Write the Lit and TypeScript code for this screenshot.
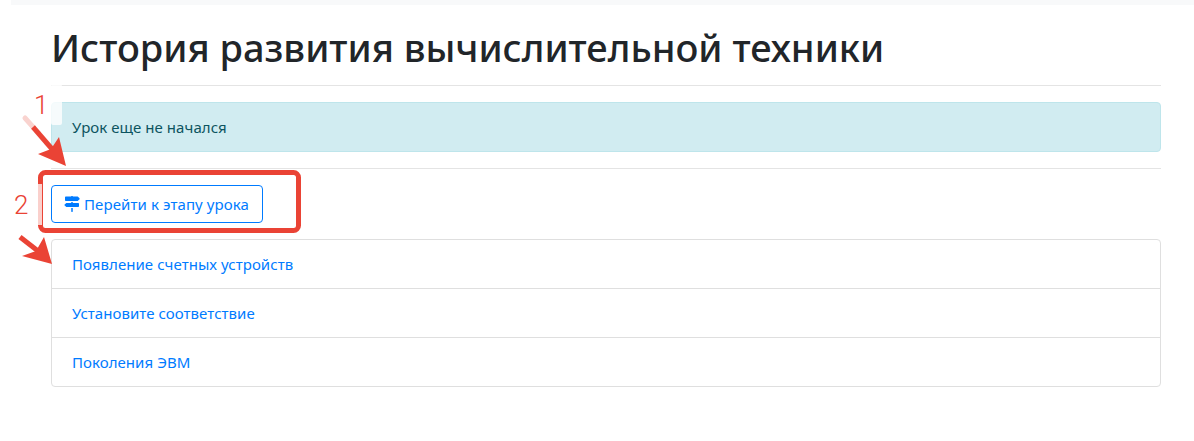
import { LitElement, html, css, svg } from 'lit';
import { customElement } from 'lit/decorators.js';

const stages = ['Появление счетных устройств', 'Установите соответствие', 'Поколения ЭВМ'];

@customElement('app-root')
export class AppRoot extends LitElement {
  static styles = css`
    :host {
      display: block;
      position: relative;
      height: 441px;
      overflow: hidden;
      background: #fff;
      font-family: 'Noto Sans', 'Open Sans', sans-serif;
      font-size: 15px;
      letter-spacing: 0.05px;
      color: #212529;
    }
    .topbar {
      height: 5px;
      margin-left: 11px;
      background: #f8f9fa;
    }
    .content {
      width: 1110px;
      margin-left: 51px;
    }
    h1 {
      margin: 18px 0 0;
      font-size: 38px;
      line-height: 48px;
      font-weight: 500;
      letter-spacing: 0;
    }
    hr {
      margin: 0;
      border: 0;
      border-top: 1px solid #e4e4e4;
    }
    .title-rule {
      margin-top: 14px;
    }
    .alert {
      margin-top: 16px;
      height: 50px;
      box-sizing: border-box;
      padding: 0 20px;
      display: flex;
      align-items: center;
      background: #d1ecf1;
      border: 1px solid #bee5eb;
      border-radius: 4px;
      color: #0c5460;
    }
    .alert-rule {
      margin-top: 16px;
    }
    .btn {
      margin-top: 16px;
      width: 212px;
      height: 38px;
      box-sizing: border-box;
      padding: 0 12px;
      display: flex;
      align-items: center;
      gap: 4px;
      background: #fff;
      border: 1px solid #007bff;
      border-radius: 4px;
      color: #007bff;
      font: inherit;
      letter-spacing: 0.1px;
    }
    .btn svg {
      width: 16px;
      height: 16px;
      fill: currentColor;
    }
    .list {
      margin-top: 16px;
      border: 1px solid #dfdfdf;
      border-radius: 4px;
    }
    .item {
      height: 48px;
      box-sizing: border-box;
      padding: 0 20px;
      display: flex;
      align-items: center;
      color: #007bff;
    }
    .item + .item {
      height: 49px;
      border-top: 1px solid #dfdfdf;
    }
    .marks {
      position: absolute;
      inset: 0;
      pointer-events: none;
    }
    .num {
      position: absolute;
      font-family: 'Roboto', sans-serif;
      font-weight: 300;
      font-size: 26px;
      line-height: 30px;
      letter-spacing: 0;
      color: #ea4335;
    }
    .one { left: 34px; top: 90px; }
    .two { left: 14px; top: 190px; }
  `;

  private arrowOne() {
    return svg`
      <line x1="25" y1="118" x2="33" y2="127" stroke="#f9d3cf" stroke-width="5" stroke-linecap="round" />
      <line x1="33" y1="127" x2="52" y2="149" stroke="#ea4335" stroke-width="5" />
      <polygon points="66,166 38,154 51,149 59,137" fill="#ea4335" />
    `;
  }

  private arrowTwo() {
    return svg`
      <line x1="20" y1="237" x2="38" y2="251" stroke="#ea4335" stroke-width="5" />
      <polygon points="52,264 22,256 36,251 44,237" fill="#ea4335" />
    `;
  }

  render() {
    return html`
      <div class="topbar"></div>
      <div class="content">
        <h1>История развития вычислительной техники</h1>
        <hr class="title-rule" />
        <div class="alert">Урок еще не начался</div>
        <hr class="alert-rule" />
        <button class="btn">
          <svg viewBox="0 0 512 512">
            <path d="M497.9 74.2 447 23c-4.5-4.5-10.600-7-17-7H280V8c0-4.400-3.600-8-8-8h-32c-4.400 0-8 3.600-8 8v8H56c-13.300 0-24 10.700-24 24v96c0 13.300 10.700 24 24 24h374c6.400 0 12.500-2.500 17-7l50.900-51.200c3.100-3.100 3.100-8.100 0-11.600zM232 496c0 8.800 7.200 16 16 16h16c8.800 0 16-7.200 16-16V384h-48v112zm224-272H280v-32h-48v32H82c-6.400 0-12.500 2.500-17 7l-50.900 51.200c-3.100 3.100-3.100 8.100 0 11.600L65 345c4.500 4.500 10.600 7 17 7h374c13.300 0 24-10.700 24-24v-80c0-13.300-10.700-24-24-24z" />
          </svg>
          Перейти к этапу урока
        </button>
        <div class="list">
          ${stages.map((s) => html`<div class="item">${s}</div>`)}
        </div>
      </div>
      <svg class="marks" width="1194" height="441">
        <rect x="51" y="84" width="11" height="41" rx="2" fill="#fff" opacity="0.8" />
        <rect x="40.500" y="172.500" width="258" height="58" rx="5" fill="none" stroke="#ea4335" stroke-width="5" />
        <rect x="38" y="184" width="4" height="41" fill="#fff" opacity="0.75" />
        ${this.arrowOne()}
        ${this.arrowTwo()}
      </svg>
      <span class="num one">1</span>
      <span class="num two">2</span>
    `;
  }
}
